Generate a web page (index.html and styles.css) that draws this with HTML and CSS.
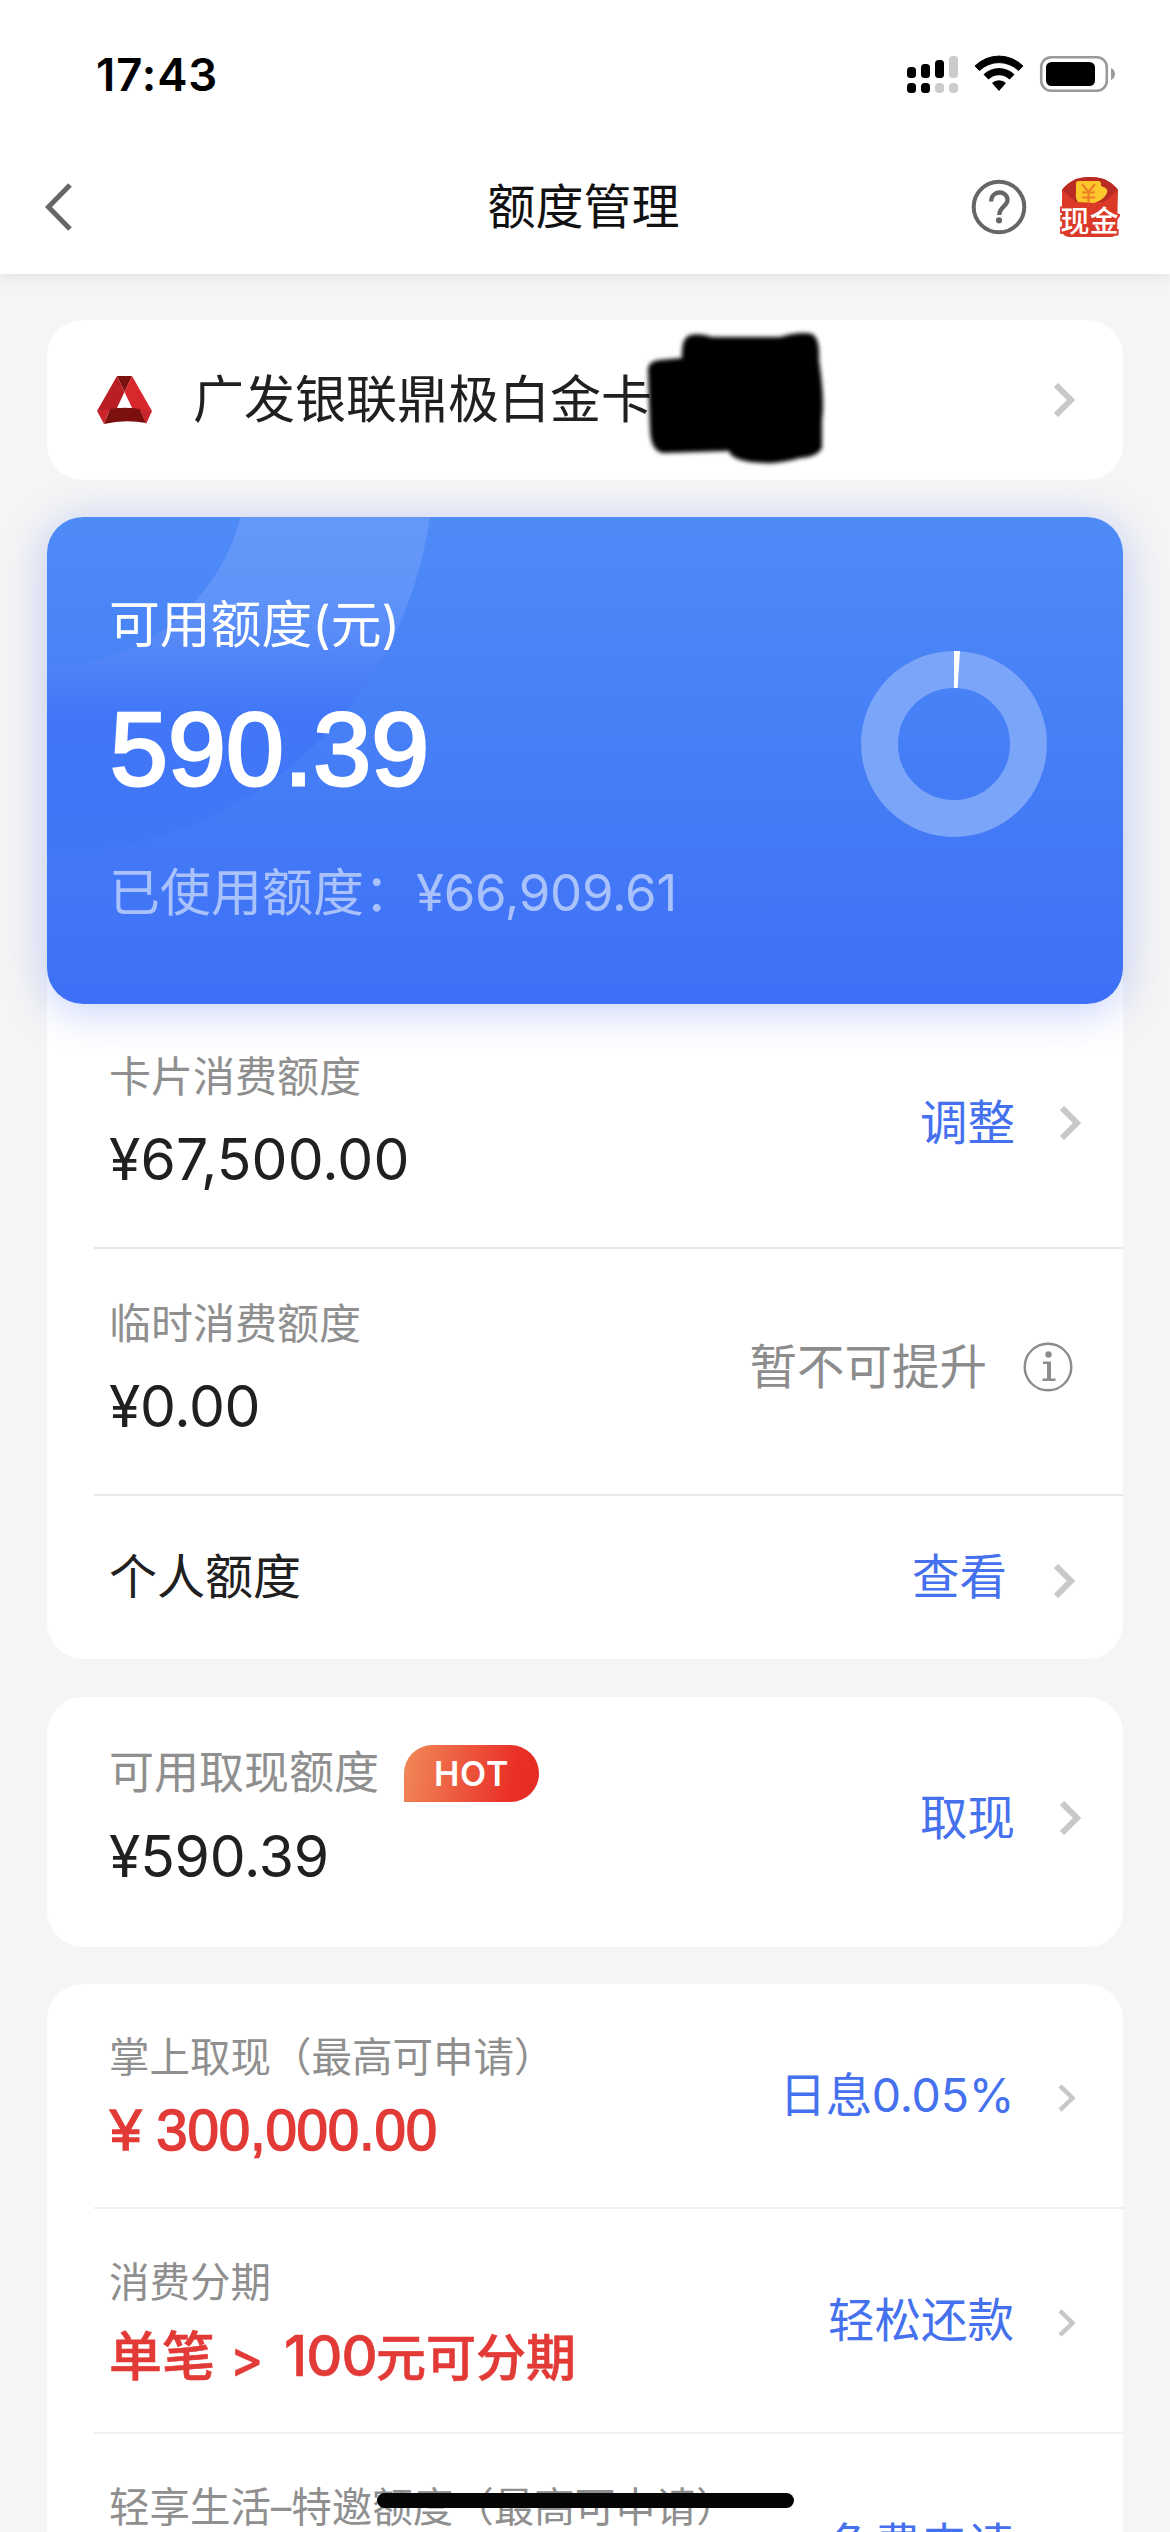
FILE: index.html
```html
<!DOCTYPE html>
<html lang="zh-CN">
<head>
<meta charset="utf-8">
<title>额度管理</title>
<link rel="stylesheet" href="styles.css">
</head>
<body>
<svg width="0" height="0" class="defs">
  <symbol id="chev" viewBox="0 0 21 34"><path d="M2 2 L17 17 L2 32" fill="none" stroke="#c8c8c9" stroke-width="6"/></symbol>
  <symbol id="chev-sm" viewBox="0 0 18 28"><path d="M2 1.800 L14.500 14 L2 26.200" fill="none" stroke="#c8c8c8" stroke-width="4.500"/></symbol>
</svg>
<div class="screen">
  <header class="top">
    <div class="status">
      <span class="time">17:43</span>
      <svg class="status-icons" width="210" height="40" viewBox="906 54 210 40">
        <g fill="#000">
          <rect x="907" y="67" width="9" height="11" rx="3.500"/>
          <rect x="921" y="64" width="9" height="14" rx="3.500"/>
          <rect x="935" y="60" width="9" height="18" rx="3.500"/>
          <rect x="907" y="83" width="9" height="10" rx="3.500"/>
          <rect x="921" y="83" width="9" height="10" rx="3.500"/>
        </g>
        <g fill="#cbcbcb">
          <rect x="949" y="56" width="9" height="22" rx="3.500"/>
          <rect x="935" y="83" width="9" height="10" rx="4"/>
          <rect x="949" y="83" width="9" height="10" rx="4"/>
        </g>
        <path d="M975 66 A34 34 0 0 1 1023 66 L1018.500 70.500 A28 28 0 0 0 979.500 70.500 Z" fill="#000" stroke="#000"/>
        <path d="M983.500 74.500 A22 22 0 0 1 1014.500 74.500 L1009.500 79.500 A15 15 0 0 0 988.500 79.500 Z" fill="#000"/>
        <path d="M992 83 A10 10 0 0 1 1006 83 L999 91 Z" fill="#000"/>
        <rect x="1041.200" y="57.200" width="65.600" height="33.600" rx="10" fill="none" stroke="#999" stroke-width="2.600"/>
        <rect x="1046" y="62" width="49" height="24" rx="5.500" fill="#000"/>
        <path d="M1111 68 Q1115 70 1115 74 Q1115 78 1111 80 Z" fill="#999"/>
      </svg>
    </div>
    <nav class="nav">
      <svg class="back" width="30" height="50" viewBox="0 0 30 50"><path d="M26 3 L4.500 25 L26 47" fill="none" stroke="#666" stroke-width="5"/></svg>
      <h1 class="title">额度管理</h1>
      <svg class="help" width="56" height="56" viewBox="0 0 56 56" fill="none" stroke="#666">
        <circle cx="28" cy="28" r="25.300" stroke-width="4"/>
        <path d="M20.200 22.500 C20.200 10.500 36.500 11 36.500 21 C36.500 27.500 28.300 27.500 28.300 36" stroke-width="4.300"/>
        <circle cx="28" cy="41.300" r="3.100" fill="#666" stroke="none"/>
      </svg>
      <svg class="cash" width="60" height="62" viewBox="1060 176 60 62">
        <path d="M1062 190 Q1066 184 1076 179 Q1090 175 1104 179 Q1114 184 1118 190 L1117 231 Q1117 237 1110 237 L1070 237 Q1062 237 1062 230 Z" fill="#dc3a28"/>
        <path d="M1062 190 Q1066 184 1076 179 Q1090 175 1104 179 Q1114 184 1118 190 L1104 202 L1076 202 Z" fill="#b92a22"/>
        <path d="M1076 183 Q1076 181 1079 181 L1098 181 Q1101 181 1101 184 L1101 186 Q1109 188 1107 193 Q1104 200 1094 203 L1078 202 Q1075 198 1076 192 Z" fill="#fbc72b"/>
        <path d="M1082 184 L1088.500 192 L1095 184 M1088.500 192 V203 M1082 192.500 H1095 M1082 197.500 H1095" fill="none" stroke="#ee7f28" stroke-width="2.200"/>
        <text x="1060.500" y="231.500" class="cash-text">现金</text>
      </svg>
    </nav>
  </header>

  <main class="content">
    <section class="card picker">
      <svg class="logo" width="56" height="50" viewBox="0 0 56 50">
        <path d="M20 1 H35 L27.500 17 Z" fill="#7c100f"/>
        <path d="M20 1 L27.500 17 L19 35 L0 36 Z" fill="#b81e23"/>
        <path d="M35 1 L55 36 L36 35 L27.500 17 Z" fill="#d8282d"/>
        <path d="M13 34 Q28 31 43 34 L49 48 Q28 44 7 49 Z" fill="#7c100f"/>
        <path d="M13 34 L0 36 L7 49 Z M43 34 L55 36 L49 49 Z" fill="#c9252a"/>
        <path d="M28 21 L34.500 33 Q28 32 21 33 Z" fill="#fff"/>
      </svg>
      <span class="card-name">广发银联鼎极白金卡(</span>
      <svg class="arrow" width="21" height="34"><use href="#chev"/></svg>
      <svg class="redact" width="190" height="146" viewBox="640 326 190 146">
        <defs><filter id="soft"><feGaussianBlur stdDeviation="2"/></filter></defs>
        <path d="M688 336 Q696 332 712 337 L780 337 Q800 331 812 334 Q820 338 819 360 Q825 400 822 420 L822 448 Q817 457 800 458 Q780 464 764 463 Q732 462 729 451 L664 453 Q651 452 650 430 L648 370 Q648 361 660 360 L682 358 Q681 340 688 336 Z" fill="#000" filter="url(#soft)"/>
      </svg>
    </section>

    <section class="card limits">
      <div class="hero">
        <svg class="hero-art" width="1076" height="487" viewBox="47 517 1076 487">
          <defs><linearGradient id="ringfade" gradientUnits="userSpaceOnUse" x1="0" y1="517" x2="0" y2="853">
            <stop offset="0" stop-color="#6498f8"/><stop offset=".25" stop-color="#6093f8"/><stop offset=".6" stop-color="#4076f7"/><stop offset="1" stop-color="#4077f7"/>
          </linearGradient></defs>
          <circle cx="47" cy="467" r="293" fill="none" stroke="url(#ringfade)" stroke-width="186"/>
          <circle cx="954" cy="744" r="74.500" fill="none" stroke="#7ba5f8" stroke-width="37"/>
          <path d="M954 651 H960 L957.600 688 H954 Z" fill="#fff"/>
        </svg>
        <div class="hero-label">可用额度(元)</div>
        <div class="hero-value">590.39</div>
        <div class="hero-used"><span>已使用额度：</span><span class="used-num">¥66,909.61</span></div>
      </div>
      <div class="row row-first">
        <div class="info"><div class="label">卡片消费额度</div><div class="value">¥67,500.00</div></div>
        <a class="action"><span>调整</span><svg width="21" height="34"><use href="#chev"/></svg></a>
      </div>
      <div class="row row-line">
        <div class="info"><div class="label">临时消费额度</div><div class="value value-short">¥0.00</div></div>
        <span class="action muted"><span>暂不可提升</span>
          <svg width="50" height="50" viewBox="0 0 50 50"><circle cx="25" cy="25" r="23.300" fill="none" stroke="#8c8c8c" stroke-width="2.400"/><circle cx="25.500" cy="12.500" r="3.200" fill="#8c8c8c"/><path d="M20 19.500 H28 V36.500 H32.500 V39 H19.500 V36.500 H24 V22 H20 Z" fill="#8c8c8c"/></svg>
        </span>
      </div>
      <div class="row row-line row-personal">
        <div class="personal">个人额度</div>
        <a class="action"><span>查看</span><svg width="21" height="34"><use href="#chev"/></svg></a>
      </div>
    </section>

    <section class="card cashout">
      <div class="row">
        <div class="info"><div class="label label-lg">可用取现额度<span class="hot">HOT</span></div><div class="value">¥590.39</div></div>
        <a class="action"><span>取现</span><svg width="21" height="34"><use href="#chev"/></svg></a>
      </div>
    </section>

    <section class="card offers">
      <div class="row offer row-first">
        <div class="info"><div class="label">掌上取现（最高可申请）</div><div class="value price"><span class="yen">¥</span>300,000.00</div></div>
        <a class="action"><span class="rate">日息0.05%</span><svg width="18" height="28"><use href="#chev-sm"/></svg></a>
      </div>
      <div class="row offer row-line">
        <div class="info"><div class="label">消费分期</div><div class="value deal"><span class="deal-lead">单笔</span><span class="deal-gt">&gt;</span><span class="deal-num">100</span><span>元可分期</span></div></div>
        <a class="action"><span>轻松还款</span><svg width="18" height="28"><use href="#chev-sm"/></svg></a>
      </div>
      <div class="row offer row-line">
        <div class="info"><div class="label">轻享生活–特邀额度（最高可申请）</div></div>
        <a class="action"><span>免费申请</span><svg width="18" height="28"><use href="#chev-sm"/></svg></a>
      </div>
    </section>
  </main>
  <div class="home-bar"></div>
</div>
</body>
</html>
```
FILE: styles.css
```css
* { box-sizing: border-box; margin: 0; padding: 0; }
body { background: #f5f5f5; font-family: Inter, "Noto Sans CJK SC", sans-serif; color: #202020; }
svg { display: block; flex: none; }
.defs { position: absolute; }
.screen { position: relative; width: 1170px; height: 2532px; overflow: hidden; background: #f5f5f5; }

.top { height: 274px; background: #fff; box-shadow: 0 2px 16px rgba(0, 0, 0, .09); }
.status { height: 148px; padding: 54px 54px 0 96px; display: flex; justify-content: space-between; align-items: flex-start; }
.time { font-size: 45.500px; font-weight: 600; line-height: 41px; color: #000; letter-spacing: .9px; }
.nav { height: 118px; padding: 0 50px 0 44px; display: flex; align-items: center; }
.title { flex: 1; padding-left: 122px; font-size: 48px; font-weight: 400; line-height: 60px; text-align: center; color: #111; }
.cash { margin-left: 33px; }
.cash-text { font-size: 29px; font-weight: 500; fill: #fff; stroke: #dc3a28; stroke-width: 4px; paint-order: stroke; }

.content { padding: 46px 47px 0; display: flex; flex-direction: column; gap: 37px; }
.card { background: #fff; border-radius: 36px; flex: none; }

.picker { position: relative; height: 160px; padding: 0 48px 0 50px; display: flex; align-items: center; }
.card-name { margin-left: 40px; font-size: 51px; line-height: 60px; }
.arrow { margin-left: auto; }
.redact { position: absolute; left: 593px; top: 6px; }

.limits { height: 1142px; }
.hero { position: relative; height: 487px; padding: 78px 62px 0; border-radius: 36px; color: #fff; background: linear-gradient(#4e8bf7, #467ff6 45%, #3e70f7); box-shadow: 0 6px 44px rgba(64, 104, 240, .32); }
.hero-art { position: absolute; left: 0; top: 0; border-radius: 36px; }
.hero-label, .hero-value, .hero-used { position: relative; white-space: nowrap; }
.hero-label { font-size: 50.800px; line-height: 60px; }
.hero-value { margin-top: 34px; padding-left: 1px; font-family: "Liberation Sans", sans-serif; font-size: 104px; line-height: 120px; letter-spacing: .2px; -webkit-text-stroke: 3px #fff; }
.hero-used { display: flex; margin-top: 54px; font-size: 51px; line-height: 60px; color: #a9c2fb; }
.used-num { margin-left: 1px; letter-spacing: -.3px; }

.row { display: flex; justify-content: space-between; align-items: flex-start; margin-left: 47px; padding: 50px 42px 0 15px; height: 247px; }
.row-first { height: 243px; padding-top: 48px; }
.row-line { border-top: 2px solid #e8e8e9; }
.label { font-size: 42px; line-height: 50px; color: #8f8f8f; white-space: nowrap; }
.value { margin-top: 25px; font-size: 57px; line-height: 66px; letter-spacing: .1px; }
.value-short { letter-spacing: -.3px; }
.action { display: flex; align-items: center; gap: 45px; margin-top: 46px; height: 50px; font-size: 47.500px; line-height: 50px; color: #4570ee; white-space: nowrap; }
.muted { gap: 36px; margin-top: 43px; padding-right: 8px; color: #8c8c8c; }
.row-personal { height: 165px; padding-right: 48px; }
.personal { margin-top: 6px; font-size: 48px; line-height: 50px; }
.row-personal .action { margin-top: 6px; gap: 47px; }
.row-personal .action svg { margin-top: 7px; }

.cashout { height: 250px; margin-top: 1px; }
.label-lg { display: flex; align-items: center; gap: 25px; height: 50px; margin-top: 1px; font-size: 45px; }
.cashout .value { margin-top: 26px; letter-spacing: -.2px; }
.hot { width: 135px; height: 57px; border-radius: 29px 29px 29px 0; background: linear-gradient(100deg, #f08a58, #ea2f27 80%, #e32c22); color: #fff; font-size: 34px; font-weight: 600; line-height: 57px; text-align: center; letter-spacing: .8px; }

.offers { height: 900px; }
.offer { height: 225px; padding: 49px 47px 0 15px; border-color: #efefef; }
.offer.row-first { height: 223px; }
.offer .label { font-size: 40.500px; }
.offer .value { margin-top: 15px; color: #e23a36; }
.offer .action { margin-top: 37px; gap: 44px; font-size: 46.500px; }
.offer .action svg { margin-top: 6px; }
.rate { letter-spacing: -.3px; }
.offer .price { padding-left: 1px; font-family: "Liberation Sans", sans-serif; font-size: 56.500px; letter-spacing: -.2px; -webkit-text-stroke: 1.500px #e23a36; }
.yen { margin-right: 15px; }
.offer .deal { display: flex; align-items: baseline; font-size: 50px; font-weight: 500; letter-spacing: 0; -webkit-text-stroke: .6px #e23a36; }
.deal-lead { font-size: 53px; }
.deal-gt { width: 54px; margin-left: 15px; }
.deal-num { width: 92px; text-align: right; font-size: 56px; letter-spacing: -1px; }

.home-bar { position: absolute; left: 377px; top: 2493px; width: 417px; height: 15px; border-radius: 8px; background: #050505; }
```
